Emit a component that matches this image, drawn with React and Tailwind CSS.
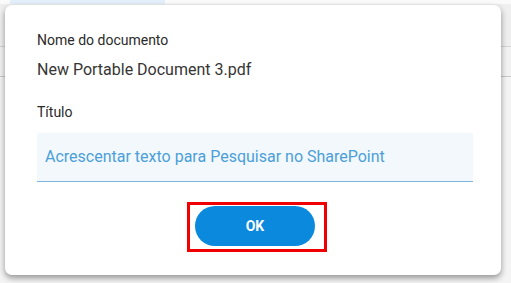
export default function App() {
  return (
    <div className="relative w-[511px] h-[283px] overflow-hidden bg-[#f4f4f4]" style={{ fontFamily: 'Roboto, "Liberation Sans", sans-serif' }}>
      <div className="flex h-[4px] bg-[#fafafa]">
        <div className="ml-[10px] w-[155px] bg-[#e3effb]" />
      </div>
      <div className="h-[43px] border-b border-[#d4d4d4] bg-[#efefef]" />
      <div className="h-[30px] border-b border-[#c8c8c8] bg-[#f2f2f2]" />
      <div className="flex-1 bg-[#f5f5f5]" />

      <div className="absolute left-[5px] top-[5px] w-[496px] h-[270px] rounded-[7px] bg-white shadow-[0_3px_6px_rgba(0,0,0,0.4)] pl-[32px] pr-[28px] pt-[25px]">
        <div className="text-[14px] leading-[20px] text-[#2b2a29]">Nome do documento</div>
        <div className="mt-[10px] text-[16px] leading-[20px] text-[#363534]">New Portable Document 3.pdf</div>
        <div className="mt-[22px] text-[14px] leading-[20px] text-[#2b2a29]">Título</div>
        <div className="mt-[11px] flex h-[49px] items-center border-b border-[#7db3dc] bg-[#f3f8fd] px-[8px]">
          <span className="text-[16px] text-[#4b9fd9]">Acrescentar texto para Pesquisar no SharePoint</span>
        </div>
        <div className="mt-[24px] flex justify-center">
          <div className="relative">
            <button className="flex h-[40px] w-[120px] items-center justify-center rounded-full bg-[#0a89dd] text-[14px] font-bold text-white">OK</button>
            <div className="pointer-events-none absolute left-[-8px] top-[-4px] right-[-12px] bottom-[-6px] border-[3px] border-[#f00000]" />
          </div>
        </div>
      </div>
    </div>
  );
}
